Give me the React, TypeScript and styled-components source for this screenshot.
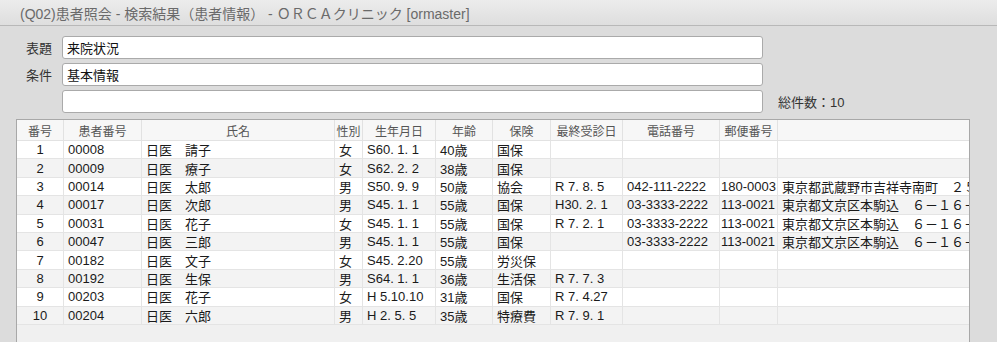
import React from "react";
import styled, { createGlobalStyle } from "styled-components";

const Global = createGlobalStyle`
  html, body { margin: 0; padding: 0; background: #dcdcdc; }
  body { font-family: "Liberation Sans", "Noto Sans CJK JP", sans-serif; overflow: hidden; }
`;

const Page = styled.div`
  width: 997px;
  height: 342px;
  background: #dcdcdc;
  overflow: hidden;
`;

const TitleBar = styled.div`
  height: 25px;
  border-bottom: 1px solid #b8b8b8;
  background: linear-gradient(#ececec, #dedede);
  display: flex;
  align-items: center;
  padding-left: 20px;
  font-size: 14px;
  color: #6a6a6a;
  white-space: pre;
`;

const Form = styled.div`
  display: grid;
  grid-template-columns: 36px 701px auto;
  column-gap: 10px;
  row-gap: 4px;
  padding: 10px 0 0 16px;
  align-items: center;
`;

const Label = styled.div`
  text-align: right;
  font-size: 13px;
  color: #333;
`;

const Input = styled.div`
  height: 23px;
  box-sizing: border-box;
  border: 1px solid #aaa;
  border-radius: 3px;
  background: #fff;
  padding-left: 4px;
  font-size: 13px;
  color: #111;
  display: flex;
  align-items: center;
`;

const Count = styled.div`
  font-size: 13px;
  color: #333;
  padding-left: 5px;
`;

const TableBox = styled.div`
  margin: 6px 0 0 16px;
  width: 954px;
  height: 240px;
  box-sizing: border-box;
  border: 1px solid #a8a8a8;
  border-bottom: none;
  background: #f0f0f0;
  overflow: hidden;
`;

const cols = "47px 78px 193px 28px 73px 57px 58px 72px 97px 58px 420px";

const HeadRow = styled.div`
  display: grid;
  grid-template-columns: ${cols};
  height: 21px;
  box-sizing: border-box;
  border-bottom: 1px solid #e2e2e2;
  background: #f7f7f7;
`;

const HeadCell = styled.div`
  display: flex;
  align-items: center;
  justify-content: center;
  font-size: 12px;
  color: #555;
  border-right: 1px solid #e2e2e2;
  white-space: nowrap;
  &:last-child { border-right: none; }
`;

const Row = styled.div<{ $alt: boolean }>`
  display: grid;
  grid-template-columns: ${cols};
  height: 18.4px;
  box-sizing: border-box;
  border-bottom: 1px solid #e4e4e4;
  background: ${(p) => (p.$alt ? "#f3f3f3" : "#ffffff")};
`;

const Cell = styled.div<{ $center?: boolean; $pad?: number }>`
  display: flex;
  align-items: center;
  justify-content: ${(p) => (p.$center ? "center" : "flex-start")};
  padding-left: ${(p) => (p.$center ? 0 : p.$pad ?? 4)}px;
  font-size: 13px;
  color: #1a1a1a;
  border-right: 1px solid #e4e4e4;
  white-space: pre;
  overflow: hidden;
  &:last-child { border-right: none; }
`;

const headers = ["番号", "患者番号", "氏名", "性別", "生年月日", "年齢", "保険", "最終受診日", "電話番号", "郵便番号", ""];

const addr1 = "東京都武蔵野市吉祥寺南町　２５－３";
const addr2 = "東京都文京区本駒込　６－１６－３";

const rows: string[][] = [
  ["1", "00008", "日医　請子", "女", "S60. 1. 1", "40歳", "国保", "", "", "", ""],
  ["2", "00009", "日医　療子", "女", "S62. 2. 2", "38歳", "国保", "", "", "", ""],
  ["3", "00014", "日医　太郎", "男", "S50. 9. 9", "50歳", "協会", "R 7. 8. 5", "042-111-2222", "180-0003", addr1],
  ["4", "00017", "日医　次郎", "男", "S45. 1. 1", "55歳", "国保", "H30. 2. 1", "03-3333-2222", "113-0021", addr2],
  ["5", "00031", "日医　花子", "女", "S45. 1. 1", "55歳", "国保", "R 7. 2. 1", "03-3333-2222", "113-0021", addr2],
  ["6", "00047", "日医　三郎", "男", "S45. 1. 1", "55歳", "国保", "", "03-3333-2222", "113-0021", addr2],
  ["7", "00182", "日医　文子", "女", "S45. 2.20", "55歳", "労災保", "", "", "", ""],
  ["8", "00192", "日医　生保", "男", "S64. 1. 1", "36歳", "生活保", "R 7. 7. 3", "", "", ""],
  ["9", "00203", "日医　花子", "女", "H 5.10.10", "31歳", "国保", "R 7. 4.27", "", "", ""],
  ["10", "00204", "日医　六郎", "男", "H 2. 5. 5", "35歳", "特療費", "R 7. 9. 1", "", "", ""],
];

const pads = [0, 4, 4, 4, 4, 4, 4, 4, 4, 1, 4];

export default function App() {
  return (
    <Page>
      <Global />
      <TitleBar>(Q02)患者照会 - 検索結果（患者情報） - ＯＲＣＡクリニック [ormaster]</TitleBar>
      <Form>
        <Label>表題</Label>
        <Input>来院状況</Input>
        <div />
        <Label>条件</Label>
        <Input>基本情報</Input>
        <div />
        <div />
        <Input />
        <Count>総件数：10</Count>
      </Form>
      <TableBox>
        <HeadRow>
          {headers.map((h, i) => (
            <HeadCell key={i}>{h}</HeadCell>
          ))}
        </HeadRow>
        {rows.map((r, i) => (
          <Row key={i} $alt={i % 2 === 1}>
            {r.map((c, j) => (
              <Cell key={j} $center={j === 0} $pad={pads[j]}>
                {c}
              </Cell>
            ))}
          </Row>
        ))}
      </TableBox>
    </Page>
  );
}
